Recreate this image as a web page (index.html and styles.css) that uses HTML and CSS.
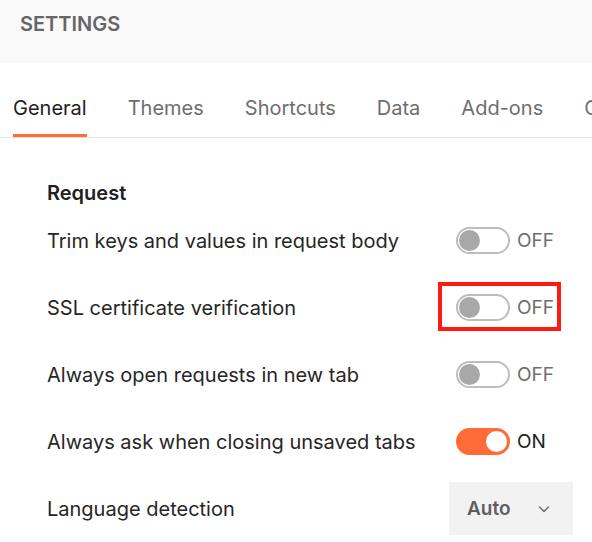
FILE: index.html
```html
<!DOCTYPE html>
<html>
<head>
<meta charset="utf-8">
<link rel="stylesheet" href="styles.css">
</head>
<body>
<div class="page">
  <header class="header"><span class="title">SETTINGS</span></header>
  <nav class="tabs">
    <span class="tab active">General</span>
    <span class="tab">Themes</span>
    <span class="tab">Shortcuts</span>
    <span class="tab">Data</span>
    <span class="tab">Add-ons</span>
    <span class="tab">Certificates</span>
  </nav>
  <main class="content">
    <h2 class="section">Request</h2>
    <div class="row">
      <span class="label">Trim keys and values in request body</span>
      <span class="control"><span class="toggle"><span class="knob"></span></span><span class="state">OFF</span></span>
    </div>
    <div class="row">
      <span class="label">SSL certificate verification</span>
      <span class="control highlighted"><span class="toggle"><span class="knob"></span></span><span class="state">OFF</span></span>
    </div>
    <div class="row">
      <span class="label">Always open requests in new tab</span>
      <span class="control"><span class="toggle"><span class="knob"></span></span><span class="state">OFF</span></span>
    </div>
    <div class="row">
      <span class="label">Always ask when closing unsaved tabs</span>
      <span class="control"><span class="toggle on"><span class="knob"></span></span><span class="state on">ON</span></span>
    </div>
    <div class="row">
      <span class="label">Language detection</span>
      <span class="select"><span class="select-value">Auto</span>
        <svg class="chevron" width="14" height="14" viewBox="0 0 14 14"><path d="M2.5 5 L7 9.5 L11.5 5" fill="none" stroke="#6b6b6b" stroke-width="1.4" stroke-linecap="round" stroke-linejoin="round"/></svg>
      </span>
    </div>
  </main>
</div>
</body>
</html>
```
FILE: styles.css
```css
* { box-sizing: border-box; }
html, body { margin: 0; padding: 0; background: #ffffff; }
body { font-family: Inter, "Noto Sans", sans-serif; color: #212121; }
.page { width: 592px; height: 542px; overflow: hidden; }

.header {
  height: 63px;
  background: #f9f9f9;
  padding: 12px 0 0 20px;
}
.title {
  font-size: 20px;
  line-height: 24px;
  font-weight: 600;
  color: #666666;
}

.tabs {
  display: flex;
  gap: 41px;
  padding-left: 13px;
  height: 75px;
  border-bottom: 1px solid #e6e6e6;
  align-items: flex-end;
  white-space: nowrap;
}
.tab {
  font-size: 20px;
  line-height: 24px;
  color: #6e6e6e;
  padding-bottom: 14px;
  border-bottom: 3px solid transparent;
}
.tab.active {
  color: #212121;
  border-bottom-color: #ff6c37;
}

.content {
  padding-left: 47px;
  padding-top: 43px;
}
.section {
  margin: 0;
  font-size: 20px;
  line-height: 24px;
  font-weight: 600;
  color: #212121;
}
.row {
  display: grid;
  grid-template-columns: 402px auto;
  align-items: center;
  height: 67px;
}
.section + .row { margin-top: 2px; }
.label {
  font-size: 20px;
  line-height: 24px;
  color: #262626;
}
.control {
  display: flex;
  align-items: center;
  gap: 7px;
  margin-left: 7px;
  position: relative;
  width: 98px;
}
.toggle {
  width: 54px;
  height: 27px;
  border: 2px solid #bdbdbd;
  border-radius: 14px;
  background: #ffffff;
  display: flex;
  align-items: center;
  padding-left: 1px;
}
.knob {
  width: 21px;
  height: 21px;
  border-radius: 50%;
  background: #a8a8a8;
}
.toggle.on {
  background: #ff6c37;
  border-color: #ff6c37;
  justify-content: flex-end;
  padding: 0 1px 0 0;
}
.toggle.on .knob { background: #ffffff; }
.state {
  font-size: 19px;
  line-height: 24px;
  color: #6e6e6e;
}
.state.on { color: #212121; }

.highlighted::after {
  content: "";
  position: absolute;
  left: -18px;
  right: -7px;
  top: -12px;
  bottom: -10px;
  border: 4px solid #ff1a0f;
}

.select {
  width: 124px;
  height: 53px;
  background: #f2f2f2;
  display: flex;
  align-items: center;
  padding-left: 18px;
}
.select-value {
  font-size: 19px;
  line-height: 24px;
  font-weight: 600;
  color: #5e5e5e;
  width: 70px;
}
.chevron { display: block; }
```
